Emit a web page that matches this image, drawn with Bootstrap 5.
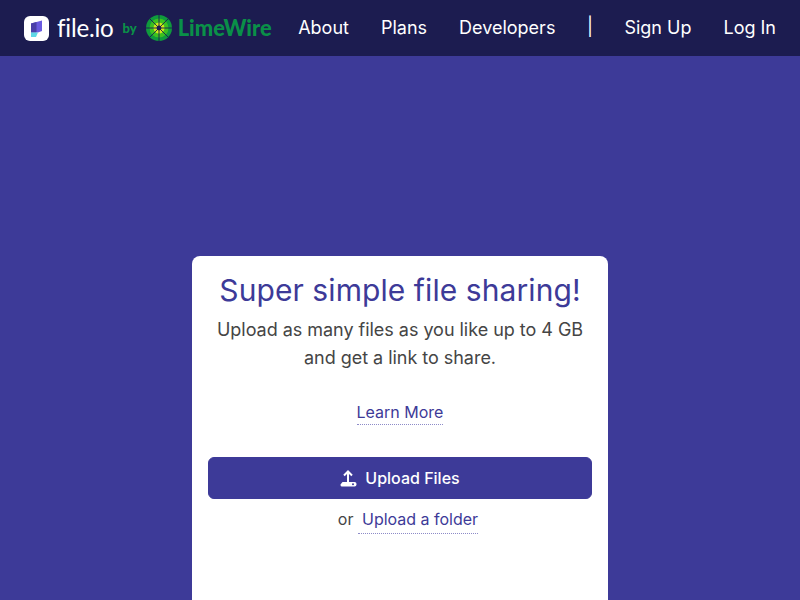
<!DOCTYPE html>
<html lang="en">
<head>
<meta charset="utf-8">
<title>file.io</title>
<link href="https://cdn.jsdelivr.net/npm/bootstrap@5.3.0/dist/css/bootstrap.min.css" rel="stylesheet">
<style>
html,body{height:100%;overflow:hidden}
body{background:#3d3a98;font-family:"Inter","Liberation Sans",sans-serif;color:#454545}
.topbar{height:56px;background:#1c1c50;padding:0 24px}
.brand-word{font-family:"Lato","Liberation Sans",sans-serif;font-size:24.2px;font-weight:400;color:#fff;letter-spacing:-.2px;line-height:1;margin-left:8px}
.brand-by{font-family:"Lato","Liberation Sans",sans-serif;font-weight:900;font-size:13px;color:#0a9048;margin:0 9px 0 9px;line-height:1}
.brand-lime{font-family:"Lato","Liberation Sans",sans-serif;font-weight:900;font-size:21.8px;color:#0a9048;margin-left:6px;line-height:1}
.toplink{color:#fff;font-size:18px;text-decoration:none;line-height:1}
.topsep{color:#fff;font-size:18px;line-height:1;margin:-2px -.5px 0}
.toplinks{gap:32px}
.signlinks{gap:32px}
.stage{padding-top:200px}
.panel{width:416px;background:#fff;border-radius:8px 8px 0 0;padding:16px;height:344px;text-align:center}
.panel-title{color:#3d3a98;font-size:30px;font-weight:400;letter-spacing:.08px;line-height:36px;margin:0}
.panel-lead{font-size:18px;line-height:28px;margin:8px 0 0;color:#454545;letter-spacing:-.03px}
.dot-link{color:#3d3a98;text-decoration:none;border-bottom:1px dotted #8d8bc8;display:inline-block;font-size:16px;line-height:24px}
.learn-row{margin-top:28px;line-height:24px}
.go-btn{background:#3d3a98;border-color:#3d3a98;color:#fff;height:42px;font-size:16px;font-weight:500;border-radius:6px;margin-top:32px}
.go-btn:hover{background:#3d3a98;border-color:#3d3a98;color:#fff}
.or-row{margin:8px 0 0 16px;font-size:16px;line-height:24px}
.or-row .dot-link{padding:0 0 2px 4px}
</style>
</head>
<body>
<nav class="topbar d-flex align-items-center">
  <a class="d-flex align-items-center text-decoration-none" href="#">
    <svg width="25" height="25" viewBox="0 0 25 25"><rect width="25" height="25" rx="6" fill="#fff"/><path d="M7 7.5 18 4.5V15L14 16.5H7Z" fill="#6a5be0"/><path d="M7 7.5 12.5 6V16.5H7Z" fill="#4a3fa8"/><path d="M7 16.5H14L12 21H7Z" fill="#5fd8e6"/></svg>
    <span class="brand-word">file.io</span>
    <span class="brand-by">by</span>
    <svg width="26" height="26" viewBox="-13 -13 26 26">
      <circle r="13" fill="#0f9a3c"/>
      <circle r="9.5" fill="#3cc01f"/>
      <circle r="5.5" fill="#d2e81c"/>
      <g stroke="#1c1c50" stroke-width=".9"><path d="M0-13V13M-13 0H13M-9.2-9.2 9.2 9.2M-9.2 9.2 9.2-9.2"/></g>
      <circle r="2.4" fill="#1c1c50"/>
    </svg>
    <span class="brand-lime">LimeWire</span>
  </a>
  <div class="d-flex align-items-center ms-auto toplinks">
    <a class="toplink" href="#">About</a>
    <a class="toplink" href="#">Plans</a>
    <a class="toplink" href="#">Developers</a>
    <span class="topsep">|</span>
    <div class="d-flex signlinks">
      <a class="toplink" href="#">Sign Up</a>
      <a class="toplink" href="#">Log In</a>
    </div>
  </div>
</nav>
<main class="stage d-flex justify-content-center">
  <section class="panel">
    <h1 class="panel-title">Super simple file sharing!</h1>
    <p class="panel-lead">Upload as many files as you like up to 4 GB and get a link to share.</p>
    <div class="learn-row"><a class="dot-link" href="#">Learn More</a></div>
    <button class="btn go-btn w-100 d-flex align-items-center justify-content-center gap-2" type="button">
      <svg width="17" height="17" viewBox="0 0 17 17"><path d="M8 12V2M4 5.5 8 1.5 12 5.5" fill="none" stroke="#fff" stroke-width="2"/><path d="M2.5 12H14.5Q16.5 12 16.5 14V14.5Q16.5 16.5 14.5 16.5H2Q.5 16.5 .5 15V14.5Z" fill="#fff"/><circle cx="13" cy="14.2" r="1" fill="#3d3a98"/></svg>
      <span>Upload Files</span>
    </button>
    <div class="or-row">or <a class="dot-link" href="#">Upload a folder</a></div>
  </section>
</main>
</body>
</html>
